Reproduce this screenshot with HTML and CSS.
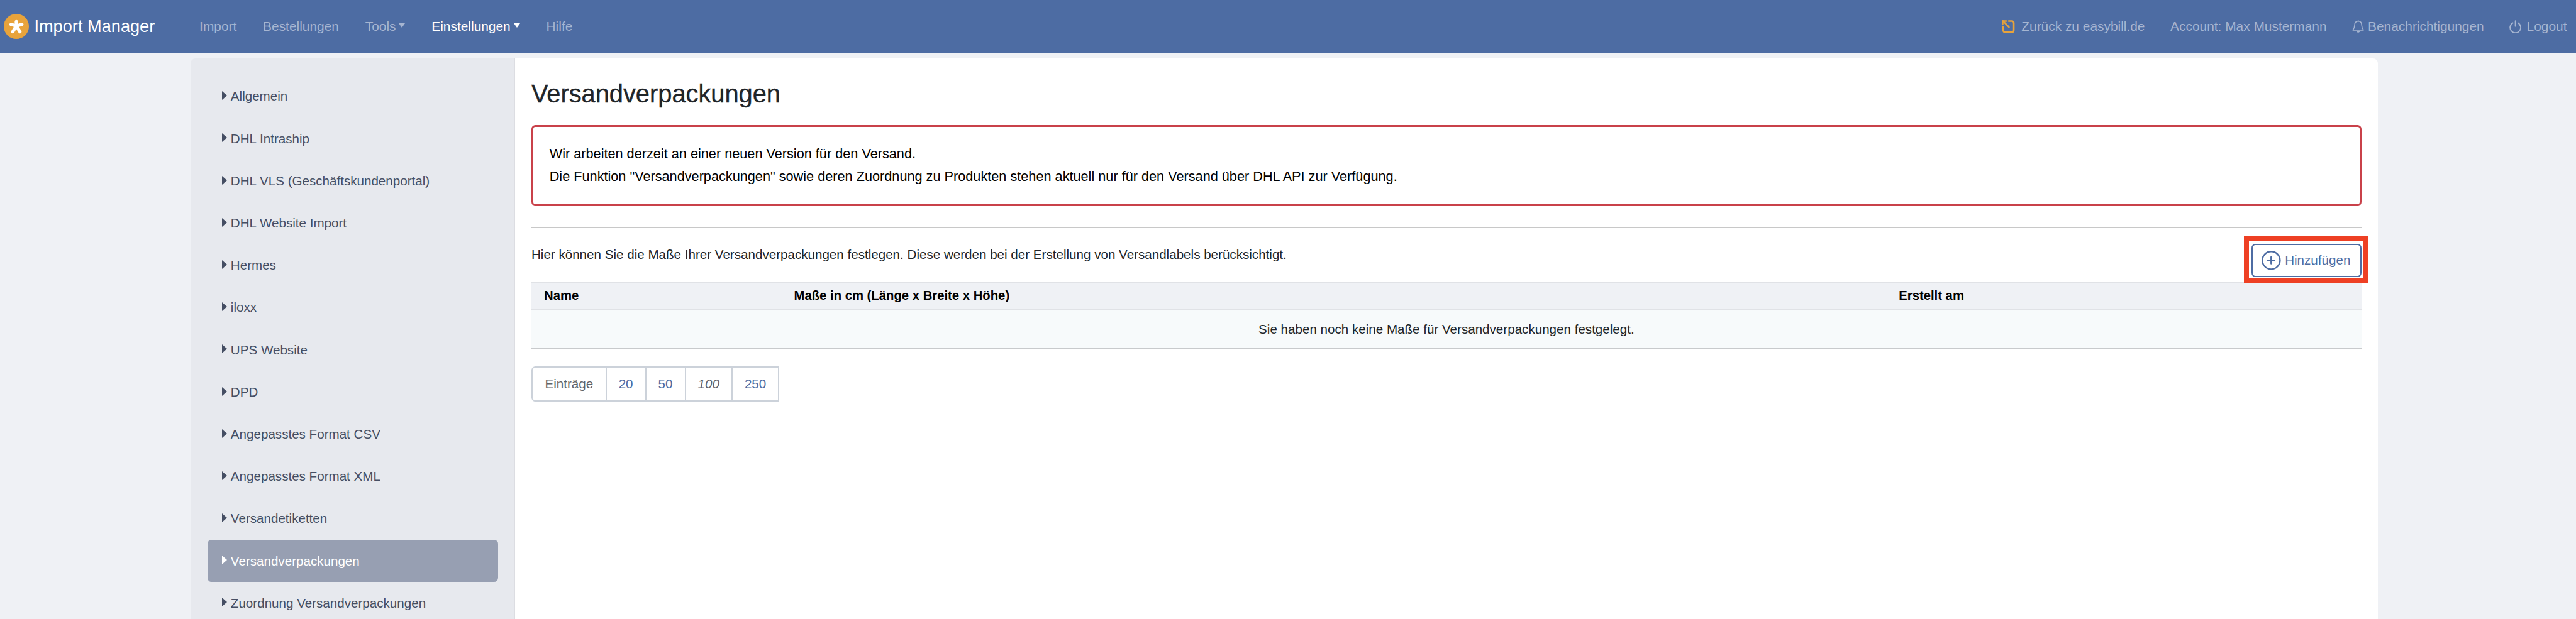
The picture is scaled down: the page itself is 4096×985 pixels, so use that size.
FILE: index.html
```html
<!DOCTYPE html>
<html lang="de">
<head>
<meta charset="utf-8">
<title>Import Manager</title>
<link rel="stylesheet" href="styles.css">
</head>
<body>
<header class="topbar">
  <a class="brand">
    <svg class="brand-logo" viewBox="0 0 50 50"><circle cx="25" cy="25" r="25" fill="#e8a33b"/><g stroke="#fff" stroke-width="6.600" stroke-linecap="round"><path d="M25 24 V15.500"/><path d="M25 24 L14.500 21"/><path d="M25 24 L36 21"/><path d="M25 24 L18 35.500"/><path d="M25 24 L32 35.500"/></g></svg>
    <span>Import Manager</span>
  </a>
  <nav class="nav nav-left">
    <a class="nav-link">Import</a>
    <a class="nav-link">Bestellungen</a>
    <a class="nav-link caret">Tools</a>
    <a class="nav-link caret active">Einstellungen</a>
    <a class="nav-link">Hilfe</a>
  </nav>
  <nav class="nav nav-right">
    <a class="nav-link">
      <svg class="icon-back" viewBox="0 0 28 28" fill="none" stroke="#e8a33b" stroke-width="3.200" stroke-linecap="round" stroke-linejoin="round"><path d="M15 3 H21 Q25 3 25 7 V21 Q25 25 21 25 H8 Q4 25 4 21 V14"/><path d="M15.500 15 L3.500 3"/><path d="M3 10 V3 H10"/></svg>
      Zurück zu easybill.de
    </a>
    <a class="nav-link">Account: Max Mustermann</a>
    <a class="nav-link">
      <svg class="icon-bell" viewBox="0 0 24 26" fill="none" stroke="#a6b5d1" stroke-width="2"><path d="M12 3 C6.500 3 5 7.500 5 11 C5 16 3.500 18 1.500 20.500 H22.500 C20.500 18 19 16 19 11 C19 7.500 17.500 3 12 3 Z" stroke-linejoin="round"/><path d="M12 3 V1"/><path d="M9.500 23 Q12 26 14.500 23" fill="#a6b5d1"/></svg>
      Benachrichtigungen
    </a>
    <a class="nav-link">
      <svg class="icon-power" viewBox="0 0 24 26" fill="none" stroke="#a6b5d1" stroke-width="2.400" stroke-linecap="round"><path d="M12 1.500 V12"/><path d="M7 5.500 A10.500 10.500 0 1 0 17 5.500"/></svg>
      Logout
    </a>
  </nav>
</header>

<main class="layout">
  <aside class="sidebar">
    <a class="side-item">Allgemein</a>
    <a class="side-item">DHL Intraship</a>
    <a class="side-item">DHL VLS (Geschäftskundenportal)</a>
    <a class="side-item">DHL Website Import</a>
    <a class="side-item">Hermes</a>
    <a class="side-item">iloxx</a>
    <a class="side-item">UPS Website</a>
    <a class="side-item">DPD</a>
    <a class="side-item">Angepasstes Format CSV</a>
    <a class="side-item">Angepasstes Format XML</a>
    <a class="side-item">Versandetiketten</a>
    <a class="side-item current">Versandverpackungen</a>
    <a class="side-item">Zuordnung Versandverpackungen</a>
  </aside>

  <section class="content">
    <h1 class="title">Versandverpackungen</h1>
    <div class="alert">
      <p>Wir arbeiten derzeit an einer neuen Version für den Versand.</p>
      <p>Die Funktion "Versandverpackungen" sowie deren Zuordnung zu Produkten stehen aktuell nur für den Versand über DHL API zur Verfügung.</p>
    </div>
    <div class="toolbar">
      <p class="desc">Hier können Sie die Maße Ihrer Versandverpackungen festlegen. Diese werden bei der Erstellung von Versandlabels berücksichtigt.</p>
      <a class="btn-add">
        <svg class="icon-plus" viewBox="0 0 38 38" fill="none" stroke="#4d6ca3"><circle cx="19" cy="19" r="17.500" stroke-width="3"/><path d="M19 12.500 V25.500 M12.500 19 H25.500" stroke-width="3" stroke-linecap="round"/></svg>
        Hinzufügen
        <span class="highlight"></span>
      </a>
    </div>
    <table class="table">
      <thead>
        <tr>
          <th class="col-name">Name</th>
          <th class="col-size">Maße in cm (Länge x Breite x Höhe)</th>
          <th>Erstellt am</th>
        </tr>
      </thead>
      <tbody>
        <tr><td colspan="3">Sie haben noch keine Maße für Versandverpackungen festgelegt.</td></tr>
      </tbody>
    </table>
    <div class="pager">
      <span class="pager-cell label">Einträge</span>
      <a class="pager-cell">20</a>
      <a class="pager-cell">50</a>
      <span class="pager-cell selected">100</span>
      <a class="pager-cell">250</a>
    </div>
  </section>
</main>
</body>
</html>
```

FILE: styles.css
```css
body {
  display: flex;
  flex-direction: column;
  margin: 0;
  height: 100vh;
  overflow: hidden;
  background: #eff1f5;
  color: #212529;
  font-family: "Liberation Sans", Arial, sans-serif;
  font-size: 20.6px;
}

p {
  margin: 0;
}

/* Top bar */
.topbar {
  flex: none;
  display: flex;
  align-items: center;
  height: 84.5px;
  padding: 0 14.5px 0 6.4px;
  box-sizing: border-box;
  background: #4d6ca3;
}

.brand {
  display: flex;
  align-items: center;
  gap: 8px;
  color: #fff;
  font-size: 27.2px;
}

.brand-logo {
  width: 40px;
  height: 40px;
}

.nav {
  display: flex;
  align-items: center;
  font-size: 20.9px;
}

.nav-left {
  gap: 41.8px;
  margin-left: 70.8px;
}

.nav-right {
  gap: 40.6px;
  margin-left: auto;
}

.nav-link {
  display: flex;
  align-items: center;
  color: #a6b5d1;
  white-space: nowrap;
}

.nav-link.active {
  color: #fff;
}

.caret::after {
  content: "";
  margin-left: 5px;
  margin-bottom: 4px;
  border-top: 7px solid currentColor;
  border-left: 5px solid transparent;
  border-right: 5px solid transparent;
}

.icon-back {
  width: 22.5px;
  height: 22.5px;
  margin-right: 9.5px;
}

.icon-bell {
  width: 19.3px;
  height: 21.7px;
  margin-right: 5.6px;
}

.icon-power {
  width: 19.3px;
  height: 20.9px;
  margin-right: 8px;
}

/* Page layout */
.layout {
  flex: 1;
  min-height: 0;
  display: flex;
  padding: 8.85px 314.6px 0 303.4px;
}

.sidebar {
  flex: none;
  width: 515.8px;
  padding: 26.5px 25.75px 0 26.55px;
  box-sizing: border-box;
  overflow: hidden;
  background: #e7e9ee;
  border-right: 1px solid #dcdde2;
  border-top-left-radius: 8px;
}

.side-item {
  display: flex;
  align-items: center;
  height: 67.2px;
  padding-left: 23.3px;
  border-radius: 6.4px;
  color: #454e63;
}

.side-item::before {
  content: "";
  margin-right: 5.6px;
  margin-bottom: 2.4px;
  border-left: 8px solid currentColor;
  border-top: 7px solid transparent;
  border-bottom: 7px solid transparent;
}

.side-item.current {
  background: #979fb2;
  color: #fff;
}

/* Content */
.content {
  flex: 1;
  min-width: 0;
  padding: 33px 26.55px 0 25.75px;
  background: #fff;
  border-top-right-radius: 8px;
}

.title {
  margin: 0 0 25.75px;
  color: #212529;
  font-size: 39.8px;
  font-weight: 400;
  line-height: 46.7px;
  -webkit-text-stroke: 0.4px #212529;
}

.alert {
  padding: 25.35px 25.75px;
  margin-bottom: 33px;
  border: 3px solid #c9414a;
  border-radius: 6.4px;
  color: #000;
  font-size: 21.7px;
  line-height: 36.2px;
}

.toolbar {
  display: flex;
  justify-content: space-between;
  align-items: flex-start;
  height: 87.7px;
  padding-top: 25.4px;
  box-sizing: border-box;
  border-top: 2px solid #c8c8c8;
}

.desc {
  line-height: 34.6px;
}

.btn-add {
  position: relative;
  display: flex;
  align-items: center;
  box-sizing: border-box;
  height: 52.3px;
  padding: 0 15.5px 0 14.2px;
  border: 2px solid #4d6ca3;
  border-radius: 6.4px;
  color: #4d6ca3;
}

.icon-plus {
  width: 30.6px;
  height: 30.6px;
  margin-right: 6.4px;
}

.highlight {
  position: absolute;
  top: -14.5px;
  left: -14.5px;
  right: -12.9px;
  bottom: -11.3px;
  border: 8px solid #ee4024;
}

.table {
  width: 100%;
  border-collapse: collapse;
  table-layout: fixed;
}

.table th {
  box-sizing: border-box;
  height: 42.65px;
  padding: 0 20.1px;
  background: #eff1f5;
  border-top: 2px solid #e0e2e6;
  border-bottom: 2px solid #e0e2e6;
  color: #000;
  font-size: 20.3px;
  font-weight: 700;
  text-align: left;
}

.col-name {
  width: 397.5px;
}

.col-size {
  width: 1756.7px;
}

.table td {
  box-sizing: border-box;
  height: 62.8px;
  padding: 0 20.1px;
  background: #f7fafb;
  border-bottom: 2px solid #c8cacc;
  text-align: center;
}

/* Page-size pager */
.pager {
  display: inline-flex;
  box-sizing: border-box;
  height: 56.3px;
  margin-top: 26.55px;
  border: 2px solid #ccd2da;
  border-radius: 6.4px 0 0 6.4px;
}

.pager-cell {
  display: flex;
  align-items: center;
  padding: 0 19px;
  border-right: 2px solid #ccd2da;
  color: #4d6ca3;
}

.pager-cell:last-child {
  border-right: 0;
}

.pager-cell.label {
  padding: 0 19.5px;
  color: #5f6368;
}

.pager-cell.selected {
  color: #5f6368;
  font-style: italic;
}
```
